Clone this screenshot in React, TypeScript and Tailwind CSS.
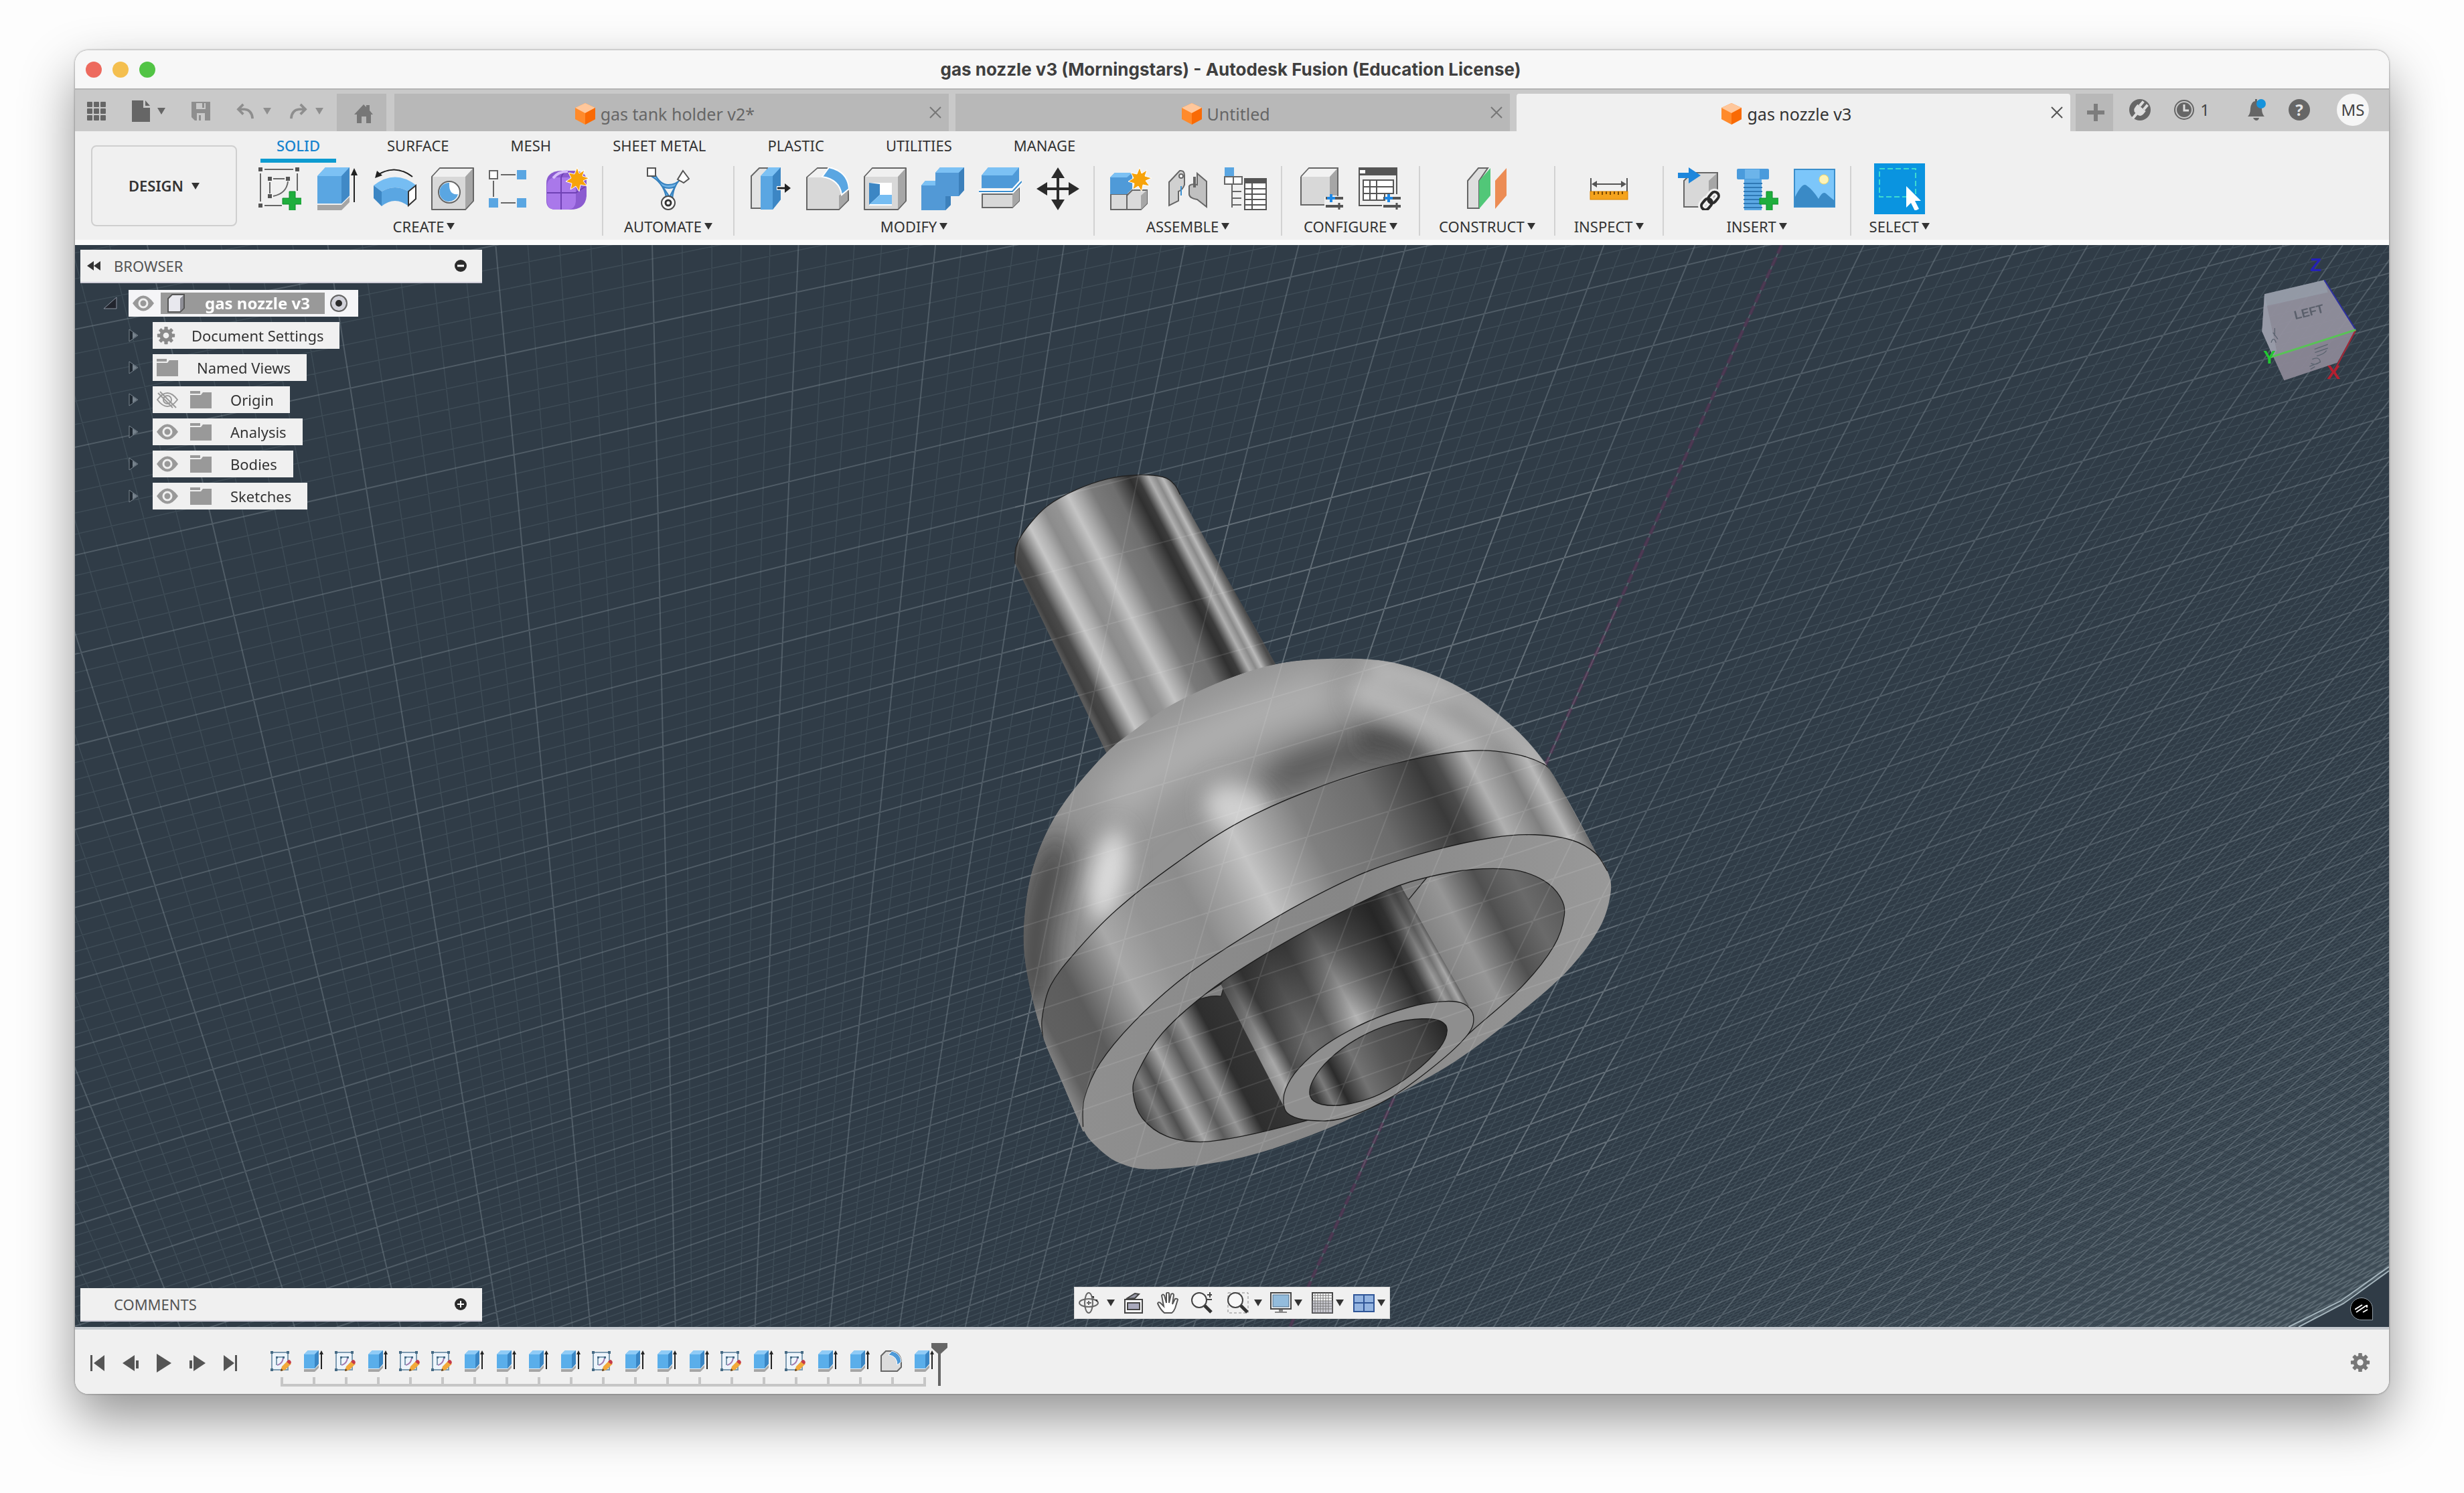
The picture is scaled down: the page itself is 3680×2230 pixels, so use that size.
import type { ReactNode } from "react";
import clsx from "clsx";

type Pt = [number, number];

// ---------- geometry helpers ----------

// Catmull-Rom spline through the points, as an SVG path
function smooth(pts: Pt[], closed = false) {
  const n = pts.length;
  const at = (i: number) => (closed ? pts[(i + n) % n] : pts[Math.max(0, Math.min(n - 1, i))]);
  let d = `M${pts[0][0]} ${pts[0][1]}`;
  const last = closed ? n : n - 1;
  for (let i = 0; i < last; i++) {
    const [p0, p1, p2, p3] = [at(i - 1), at(i), at(i + 1), at(i + 2)];
    const c1 = [p1[0] + (p2[0] - p0[0]) / 6, p1[1] + (p2[1] - p0[1]) / 6];
    const c2 = [p2[0] - (p3[0] - p1[0]) / 6, p2[1] - (p3[1] - p1[1]) / 6];
    d += `C${c1[0].toFixed(1)} ${c1[1].toFixed(1)} ${c2[0].toFixed(1)} ${c2[1].toFixed(1)} ${p2[0]} ${p2[1]}`;
  }
  return closed ? d + "Z" : d;
}

// Ground plane in perspective: u lines run top to bottom, v lines left to right
function uLine(k: number) {
  const x = (y: number) =>
    (26.5 * (220 + 0.2342 * (y - 367)) + k * (8317 - 1.858 * y)) / (26.5 + k);
  return `M${(x(366) - 112).toFixed(1)} 0L${(x(2066) - 112).toFixed(1)} 1700`;
}

function vLine(m: number) {
  const y = (x: number) =>
    (39.5 * (491.7 - 0.1996 * (x - 112)) + m * (8317 - x)) / (39.5 + 1.858 * m);
  return `M-88 ${(y(24) - 366).toFixed(1)}L3488 ${(y(3600) - 366).toFixed(1)}`;
}

function gridPath(minor: boolean) {
  let d = "";
  for (let i = -25; i <= 365; i++) {
    if ((i % 5 === 0) === minor) continue;
    d += uLine(i / 5) + vLine(i / 5);
  }
  return d;
}

const MINOR_GRID = gridPath(true);
const MAJOR_GRID = gridPath(false);

// ---------- small shared pieces ----------

function Svg({ box, className, children }: { box: string; className?: string; children: ReactNode }) {
  return (
    <svg viewBox={box} className={clsx("shrink-0", className)} fill="none" aria-hidden="true">
      {children}
    </svg>
  );
}

function Caret({ className = "w-3 h-3" }: { className?: string }) {
  return (
    <Svg box="0 0 12 12" className={className}>
      <path d="M0 1h12L6 11z" fill="currentColor" />
    </Svg>
  );
}

function IconButton({ label, className, children }: { label: string; className?: string; children: ReactNode }) {
  return (
    <button type="button" aria-label={label} className={clsx("flex items-center justify-center shrink-0", className)}>
      {children}
    </button>
  );
}

function Gear({ className, fill = "#777" }: { className?: string; fill?: string }) {
  return (
    <Svg box="0 0 32 32" className={className}>
      <g fill={fill}>
        {[0, 45, 90, 135].map((a) => (
          <rect key={a} x="13" y="1" width="6" height="30" rx="1" transform={`rotate(${a} 16 16)`} />
        ))}
        <circle cx="16" cy="16" r="11" />
      </g>
      <circle cx="16" cy="16" r="5" fill="#f0f0f0" />
    </Svg>
  );
}

// ---------- ribbon icons, all on a 64 grid ----------

const O = "#666";

function Tool({ children }: { children: ReactNode }) {
  return <Svg box="0 0 64 64" className="size-16">{children}</Svg>;
}

function Plus() {
  return <path d="M46 36h9v10h10v9H55v10h-9V55H36v-9h10z" fill="#1fae3d" stroke="#0d8a2b" />;
}

function Star() {
  return (
    <path
      d="M46 0l3 9 8-5-3 9 10 3-9 4 6 8-10-2-2 10-5-8-8 5 2-9-9-3 8-5-4-8 9 2z"
      fill="#f7a30a"
      stroke="#fff"
    />
  );
}

function SketchIcon() {
  return (
    <Tool>
      <path d="M9 3h43M3 9v42M58 9v26M9 57h26" stroke={O} strokeWidth="2" />
      <path d="M22 17h17M17 22v17M44 21q-2 18-22 22" stroke={O} strokeWidth="2" />
      <path d="M0 0h6v6H0zM55 0h6v6h-6zM0 54h6v6H0zM14 14h6v6h-6zM41 14h6v6h-6zM14 40h6v6h-6z" fill="#555" />
      <Plus />
    </Tool>
  );
}

function ExtrudeIcon() {
  return (
    <Tool>
      <path d="M2 56h36l12-12v8L38 64H2z" fill="#a5a5a5" />
      <path d="M2 13L14 0h36v42L38 54H2z" fill="#5aa6e2" />
      <path d="M2 13L14 0h36L38 13z" fill="#7cc1f4" />
      <path d="M38 13L50 0v42L38 54z" fill="#4089c6" />
      <path d="M57 52V8" stroke="#222" strokeWidth="2" />
      <path d="M52 12l5-11 5 11z" fill="#222" />
    </Tool>
  );
}

function RevolveIcon() {
  return (
    <Tool>
      <path d="M5 12Q32-6 58 14" stroke="#222" strokeWidth="2" />
      <path d="M2 16L5 5l8 7z" fill="#222" />
      <path d="M0 27Q32 2 64 27L52 36Q32 24 12 36z" fill="#76bdf2" />
      <path d="M0 27l12 9v22L0 46z" fill="#3c86c4" />
      <path d="M12 36q20-12 40 0v22Q32 42 12 58z" fill="#5aa6e2" />
      <path d="M52 36l11-9v20L52 57z" fill="#fff" stroke="#333" strokeWidth="2" />
    </Tool>
  );
}

function GrayCube({ children }: { children?: ReactNode }) {
  return (
    <>
      <path d="M1 14L13 1h50v49L51 63H1z" fill="#d8d8d8" stroke={O} strokeWidth="2" strokeLinejoin="round" />
      <path d="M2 14L13 2h49L51 14z" fill="#f0f0f0" />
      <path d="M51 14L62 2v48L51 62z" fill="#a6a6a6" />
      {children}
    </>
  );
}

function HoleIcon() {
  return (
    <Tool>
      <GrayCube>
        <circle cx="27" cy="37" r="16" fill="#fff" stroke={O} strokeWidth="2" />
        <path d="M27 23a14 14 0 1 0 13 17q-14 2-13-17z" fill="#5aa6e2" />
      </GrayCube>
    </Tool>
  );
}

function PatternIcon() {
  return (
    <Tool>
      <path d="M18 11h22M18 53h22M7 20v24" stroke={O} strokeWidth="2" />
      <rect x="1" y="5" width="12" height="12" fill="#fff" stroke={O} strokeWidth="2" />
      <path d="M42 4h14v14H42zM0 46h14v14H0zM42 46h14v14H42z" fill="#5aa6e2" />
    </Tool>
  );
}

function FormIcon() {
  return (
    <Tool>
      <path d="M0 24Q0 6 22 5h18q19 0 20 14v24q-2 20-24 20H12Q0 62 0 50z" fill="#8b5bd0" />
      <path d="M1 28q0-12 12-13h22q8 0 9 12v24q-1 11-11 12H12Q1 62 1 50z" fill="#a978ea" />
      <path d="M1 38h43l15-10M22 15v48M22 15q2-7 9-10" stroke="#6f41b4" strokeWidth="2" />
      <path d="M10 16Q18 6 32 6" stroke="#d6bdfa" strokeWidth="4" />
      <Star />
    </Tool>
  );
}

function AutomateIcon() {
  return (
    <Tool>
      <path d="M12 10q8 16 20 16T52 16q-14 12-14 36h-8Q28 26 8 14z" fill="#6fb2e6" stroke="#3580bd" strokeWidth="2" />
      <path d="M24 29q9 4 18 0L34 44z" fill="#f0f0f0" stroke="#3580bd" strokeWidth="2" />
      <rect x="1" y="1" width="12" height="12" fill="#fff" stroke="#555" strokeWidth="2" />
      <path d="M54 5l9 12-8 6-9-5z" fill="#fff" stroke="#555" strokeWidth="2" />
      <circle cx="32" cy="53" r="10" fill="#fff" stroke="#4a4a4a" strokeWidth="2" />
      <circle cx="32" cy="53" r="4" fill="#fff" stroke="#333" strokeWidth="3" />
    </Tool>
  );
}

function PressPullIcon() {
  return (
    <Tool>
      <path d="M4 13L16 1h12v60H4z" fill="#e3e3e3" stroke={O} strokeWidth="2" />
      <path d="M18 13L30 0h18v48L36 63H18z" fill="#5aa6e2" />
      <path d="M18 13L30 0h18L36 13z" fill="#7cc1f4" />
      <path d="M36 13L48 0v48L36 63z" fill="#3c86c4" />
      <path d="M42 31h14" stroke="#fff" strokeWidth="6" />
      <path d="M43 31h14" stroke="#222" strokeWidth="3" />
      <path d="M54 24l9 7-9 7z" fill="#222" />
    </Tool>
  );
}

function FilletIcon() {
  return (
    <Tool>
      <path d="M1 15L17 1h14q32 6 32 40v8L49 63H1z" fill="#d8d8d8" stroke={O} strokeWidth="2" />
      <path d="M2 15L17 2h14l-8 13z" fill="#f2f2f2" />
      <path d="M49 62V42l13-8v15z" fill="#a6a6a6" />
      <path d="M24 14L34 0q28 6 30 32L53 41Q50 18 24 14z" fill="#5aa6e2" stroke="#fff" strokeWidth="2" />
    </Tool>
  );
}

function ShellIcon() {
  return (
    <Tool>
      <GrayCube>
        <path d="M8 23h34v34H8z" fill="#fff" />
        <path d="M8 23l16 2v16L8 56z" fill="#3c86c4" />
        <path d="M24 41h18v14H9z" fill="#76bdf2" />
      </GrayCube>
    </Tool>
  );
}

function CombineIcon() {
  return (
    <Tool>
      <path d="M0 27l6-7h15V8l7-8h36v34l-8 9H44v13l-8 8H0z" fill="#5299d6" />
      <path d="M0 27l6-7h15v7zM21 8l7-8h36l-8 8z" fill="#7cc1f4" />
      <path d="M56 8l8-8v34l-8 9zM36 43h8v13l-8 8z" fill="#3c80bb" />
    </Tool>
  );
}

function SplitIcon() {
  return (
    <Tool>
      <path d="M5 40h46l9-8v18L50 60H5z" fill="#d8d8d8" stroke={O} strokeWidth="2" />
      <path d="M50 40l10-8v18L50 60z" fill="#a6a6a6" />
      <path d="M4 12L14 0h46v20L50 31H4z" fill="#4f9ad8" />
      <path d="M4 12L14 0h46L50 12z" fill="#7cc1f4" />
      <path d="M0 36h50l14-15" stroke="#fff" strokeWidth="6" />
      <path d="M0 36h50l14-15" stroke="#3a8fd0" strokeWidth="2" />
    </Tool>
  );
}

function MoveIcon() {
  return (
    <Tool>
      <path d="M32 10v44M10 32h44" stroke="#2b2b2b" strokeWidth="4" />
      <path d="M32 0l10 16H22zM32 64l10-16H22zM0 32l16-10v20zM64 32L48 22v20z" fill="#2b2b2b" />
    </Tool>
  );
}

function NewComponentIcon() {
  return (
    <Tool>
      <path d="M3 40h24v23H3z" fill="#dadada" stroke={O} strokeWidth="2" />
      <path d="M27 42l8-8h22v20l-9 9H27z" fill="#dadada" stroke={O} strokeWidth="2" />
      <path d="M48 42l9-8v20l-9 9z" fill="#a6a6a6" />
      <path d="M2 15l7-7h26v24l-8 8H2z" fill="#4f9ad8" />
      <path d="M2 15l7-7h26l-8 7z" fill="#7cc1f4" />
      <Star />
    </Tool>
  );
}

function JointIcon() {
  return (
    <Tool>
      <path d="M4 57V22L20 5q7-1 7 7v14q-3 8-9 10v14z" fill="#d0d0d0" stroke={O} strokeWidth="2" />
      <circle cx="22" cy="13" r="3" fill="#fff" stroke={O} strokeWidth="2" />
      <path d="M22 28v14" stroke="#3a8fd0" strokeWidth="2" />
      <path d="M46 9l14 12v38L46 48q-12-2-12-8V28q2-4 12-2z" fill="#c0c0c0" stroke={O} strokeWidth="2" />
      <path d="M42 14v16" stroke={O} strokeWidth="4" />
    </Tool>
  );
}

function BomIcon() {
  return (
    <Tool>
      <path d="M12 24v36M12 36h14M12 46h14M12 56h14" stroke={O} strokeWidth="2" />
      <rect x="1" y="0" width="14" height="14" fill="#5aa6e2" />
      <path d="M1 14h13v11H1zM14 14h13v11H14z" fill="#fff" stroke={O} strokeWidth="2" />
      <rect x="31" y="17" width="32" height="46" fill="#fff" stroke="#555" strokeWidth="2" />
      <rect x="31" y="16" width="32" height="8" fill="#555" />
      <path d="M31 32h32M31 40h32M31 48h32M31 56h32M42 24v39" stroke="#555" strokeWidth="2" />
    </Tool>
  );
}

function Sliders() {
  return (
    <>
      <path d="M38 46h28M38 58h28" stroke="#555" strokeWidth="4" />
      <path d="M58 53v10" stroke="#555" strokeWidth="3" />
      <path d="M46 40v12M40 46h12" stroke="#1e88e5" strokeWidth="4" />
    </>
  );
}

function ConfigureIcon() {
  return (
    <Tool>
      <path d="M1 14L13 1h43v42M36 56H1V14" fill="#d8d8d8" stroke={O} strokeWidth="2" />
      <path d="M2 14L13 2h42L44 14z" fill="#f2f2f2" />
      <path d="M44 14L55 2v40H44z" fill="#a6a6a6" />
      <path d="M2 14h42v30H36v11H2z" fill="#d8d8d8" />
      <Sliders />
    </Tool>
  );
}

function ConfigTableIcon() {
  return (
    <Tool>
      <path d="M36 57H2V2h56v38" stroke="#555" strokeWidth="2" />
      <rect x="1" y="0" width="58" height="12" fill="#555" />
      <rect x="3" y="4" width="8" height="5" fill="#fff" />
      <path d="M8 19h45v20H40v10H8z" fill="#fff" stroke="#555" strokeWidth="2" />
      <path d="M8 29h45M8 39h32M18 19v30M28 19v30" stroke="#555" strokeWidth="2" />
      <Sliders />
    </Tool>
  );
}

function PlaneIcon() {
  return (
    <Tool>
      <path d="M3 20L19 1h14L20 20v41H3z" fill="#dedede" stroke={O} strokeWidth="2" />
      <path d="M20 20L37 1v41L20 62z" fill="#51c778" />
      <path d="M44 20L61 1v41L44 62z" fill="#ec8c54" />
    </Tool>
  );
}

function MeasureIcon() {
  return (
    <Tool>
      <path d="M5 16v20M59 16v20M10 25h44" stroke="#555" strokeWidth="2" />
      <path d="M6 25l8-5v10zM58 25l-8-5v10z" fill="#555" />
      <rect x="4" y="36" width="56" height="12" fill="#f5a31d" stroke="#d98200" />
      <path d="M10 36v5M16 36v4M22 36v5M28 36v4M34 36v5M40 36v4M46 36v5M52 36v4" stroke="#7a4a00" strokeWidth="2" />
    </Tool>
  );
}

function InsertIcon() {
  return (
    <Tool>
      <path d="M9 20L21 8h38v38L46 59H9z" fill="#d8d8d8" stroke={O} strokeWidth="2" />
      <path d="M46 20L58 9v36L46 58z" fill="#a6a6a6" />
      <path d="M0 8h16V0l18 12-18 12v-8H0z" fill="#1d86dc" />
      <g stroke="#f0f0f0" strokeWidth="10">
        <rect x="47" y="36" width="12" height="18" rx="6" transform="rotate(40 53 45)" />
        <rect x="37" y="46" width="12" height="18" rx="6" transform="rotate(40 43 55)" />
      </g>
      <g stroke="#2b2b2b" strokeWidth="4">
        <rect x="47" y="36" width="12" height="18" rx="6" transform="rotate(40 53 45)" />
        <rect x="37" y="46" width="12" height="18" rx="6" transform="rotate(40 43 55)" />
      </g>
    </Tool>
  );
}

function FastenerIcon() {
  return (
    <Tool>
      <rect x="2" y="2" width="48" height="16" rx="2" fill="#4a9bdc" />
      <path d="M14 3h22v14H14z" fill="#6cb4ea" />
      <rect x="13" y="18" width="26" height="46" fill="#5ba8e4" />
      <path d="M12 24h28M12 30h28M12 36h28M12 42h28M12 48h28M12 54h28M12 60h28" stroke="#2f78b5" strokeWidth="2" />
      <Plus />
    </Tool>
  );
}

function CanvasIcon() {
  return (
    <Tool>
      <rect x="2" y="3" width="60" height="56" fill="#7cc6fa" stroke="#3b8ecb" strokeWidth="2" />
      <path d="M3 44Q14 22 20 27q9 6 18 20 6-12 11-8 8 7 12 10v9H3z" fill="#3a8ac6" />
      <circle cx="46" cy="18" r="7" fill="#fdf3b8" stroke="#f4d660" />
    </Tool>
  );
}

function SelectIcon() {
  return (
    <Tool>
      <rect x="2" y="2" width="54" height="42" stroke="#3ddad0" strokeWidth="2" strokeDasharray="8 4" />
      <path d="M42 28v32l7-7 6 12 6-3-6-12h9z" fill="#fff" />
    </Tool>
  );
}

// ---------- title bar ----------

function TitleBar() {
  return (
    <header className="relative flex h-[57px] items-center justify-center bg-[#f7f7f7] pr-1">
      <div className="absolute left-4 flex gap-4">
        <button type="button" aria-label="Close" className="size-6 rounded-full bg-[#ed6a5e]" />
        <button type="button" aria-label="Minimize" className="size-6 rounded-full bg-[#f4bf4f]" />
        <button type="button" aria-label="Zoom" className="size-6 rounded-full bg-[#52c445]" />
      </div>
      <h1 className="font-['Inter',sans-serif] text-[26px] font-bold text-[#3f3f3f]">
        gas nozzle v3 (Morningstars) - Autodesk Fusion (Education License)
      </h1>
    </header>
  );
}

// ---------- document tabs ----------

function BoxIcon() {
  return (
    <Svg box="0 0 30 32" className="w-[30px] h-8">
      <path d="M15 0l15 7v17l-15 8-15-8V7z" fill="#ff8a2b" />
      <path d="M15 0l15 7-15 8L0 7z" fill="#ffc79b" />
      <path d="M15 15l15-8v17l-15 8z" fill="#f96a05" />
    </Svg>
  );
}

function DocTab({ name, active }: { name: string; active?: boolean }) {
  return (
    <div
      className={clsx(
        "flex flex-1 min-w-0 items-center pl-3 pr-2 text-[25px]",
        active ? "bg-[#f0f0f0] text-[#333] rounded-t" : "bg-[#b8b8b8] text-[#666]"
      )}
    >
      <button type="button" className="flex flex-1 min-w-0 items-center justify-center gap-2 pt-1">
        <BoxIcon />
        <span className="truncate leading-8">{name}</span>
      </button>
      <IconButton label={`Close ${name}`} className="size-6">
        <Svg box="0 0 24 24" className="size-6">
          <path d="M4 4l16 16M20 4L4 20" stroke={active ? "#555" : "#777"} strokeWidth="2" />
        </Svg>
      </IconButton>
    </div>
  );
}

function TabBar() {
  return (
    <div className="flex h-16 items-stretch bg-[#c9c9c9] border-t-2 border-[#b4b4b4] pt-1.5">
      <div className="-mt-1 flex w-[391px] shrink-0 items-center pl-[18px] text-[#666]">
        <IconButton label="Data panel" className="w-7">
          <Svg box="0 0 28 28" className="size-7">
            {[0, 10, 20].map((y) =>
              [0, 10, 20].map((x) => (
                <rect key={`${x}-${y}`} x={x} y={y} width="8" height="8" rx="1" fill="#666" />
              ))
            )}
          </Svg>
        </IconButton>
        <IconButton label="File" className="ml-[38px] w-[52px] gap-2.5">
          <Svg box="0 0 28 32" className="w-7 h-8">
            <path d="M0 0h17v11h10v21H0zM20 0l7 8h-7z" fill="#666" />
          </Svg>
          <Caret />
        </IconButton>
        <IconButton label="Save" className="ml-[38px] w-7 text-[#8e8e8e]">
          <Svg box="0 0 28 28" className="size-7">
            <path d="M0 0h28v28H5l-5-5z" fill="#8e8e8e" />
            <path d="M7 2h14v9H7zM8 17h12v11H8z" fill="#c9c9c9" />
            <path d="M16 2h3v7h-3zM11 20h3v8h-3z" fill="#8e8e8e" />
          </Svg>
        </IconButton>
        <IconButton label="Undo" className="ml-[38px] w-[54px] gap-3 text-[#8e8e8e]">
          <Svg box="0 0 28 26" className="w-7 h-6">
            <path d="M10 2L2 10l8 8M2 10h10q12 1 13 15" stroke="#8e8e8e" strokeWidth="4" />
          </Svg>
          <Caret />
        </IconButton>
        <IconButton label="Redo" className="ml-6 w-[54px] gap-3 text-[#8e8e8e]">
          <Svg box="0 0 28 26" className="w-7 h-6">
            <path d="M18 2l8 8-8 8M26 10H16Q4 11 3 25" stroke="#8e8e8e" strokeWidth="4" />
          </Svg>
          <Caret />
        </IconButton>
      </div>
      <IconButton label="Home" className="mr-3 w-[74px] bg-[#b8b8b8] pl-1.5">
        <Svg box="0 0 28 28" className="size-7 mt-1">
          <path d="M14 0l4 4V1h5v8l5 6h-3v13h-7V18h-7v10H4V15H0z" fill="#777" />
        </Svg>
      </IconButton>
      <nav className="flex flex-1 min-w-0 gap-2.5" aria-label="Documents">
        <DocTab name="gas tank holder v2*" />
        <DocTab name="Untitled" />
        <DocTab name="gas nozzle v3" active />
      </nav>
      <IconButton label="New tab" className="ml-2 w-[56px] bg-[#b8b8b8] pl-1">
        <Svg box="0 0 26 26" className="size-[26px]">
          <path d="M13 0v26M0 13h26" stroke="#7d7d7d" strokeWidth="6" />
        </Svg>
      </IconButton>
      <div className="-mt-2 flex shrink-0 items-center pr-[30px] pl-6 text-2xl text-[#444]">
        <IconButton label="Extensions" className="w-8">
          <Svg box="0 0 32 32" className="size-8">
            <circle cx="16" cy="16" r="16" fill="#666" />
            <g transform="rotate(40 16 16)">
              <path d="M8 12h16v4q0 8-6 8v9h-4v-9q-6 0-6-8z" fill="#dcdcdc" />
              <path d="M12 12V3M20 12V3" stroke="#dcdcdc" strokeWidth="4" />
            </g>
          </Svg>
        </IconButton>
        <button type="button" className="ml-[34px] flex items-center gap-2" aria-label="Job status, 1 job">
          <Svg box="0 0 32 32" className="size-8">
            <circle cx="16" cy="16" r="14" stroke="#666" strokeWidth="2" />
            <circle cx="16" cy="16" r="11" fill="#666" />
            <path d="M16 8v9h7" stroke="#ddd" strokeWidth="3" />
          </Svg>
          <span>1</span>
        </button>
        <IconButton label="Notifications" className="ml-[54px] w-8">
          <Svg box="0 0 32 34" className="w-8 h-[34px]">
            <path d="M3 27q4-4 4-12Q8 5 14 4V1h3v3q7 2 7 11 0 8 4 12z" fill="#666" />
            <path d="M11 29h9q-1 4-4 4t-5-4z" fill="#666" />
            <circle cx="23" cy="8" r="7" fill="#1593dc" />
          </Svg>
        </IconButton>
        <IconButton label="Help" className="ml-8 size-8 rounded-full bg-[#666] font-bold text-[#e4e4e4]">
          ?
        </IconButton>
        <button type="button" aria-label="Account" className="ml-10 size-12 rounded-full bg-[#f6f6f6]">
          MS
        </button>
      </div>
    </div>
  );
}

// ---------- ribbon ----------

const RIBBON_TABS = ["SOLID", "SURFACE", "MESH", "SHEET METAL", "PLASTIC", "UTILITIES", "MANAGE"];

const GROUPS: { label: string; pad: string; icons: [string, () => ReactNode][] }[] = [
  {
    label: "CREATE",
    pad: "pl-2.5 pr-[19px]",
    icons: [
      ["Create Sketch", SketchIcon],
      ["Extrude", ExtrudeIcon],
      ["Revolve", RevolveIcon],
      ["Hole", HoleIcon],
      ["Pattern", PatternIcon],
      ["Create Form", FormIcon],
    ],
  },
  { label: "AUTOMATE", pad: "px-[31px]", icons: [["Automated Modeling", AutomateIcon]] },
  {
    label: "MODIFY",
    pad: "px-[21px]",
    icons: [
      ["Press Pull", PressPullIcon],
      ["Fillet", FilletIcon],
      ["Shell", ShellIcon],
      ["Combine", CombineIcon],
      ["Split Body", SplitIcon],
      ["Move", MoveIcon],
    ],
  },
  {
    label: "ASSEMBLE",
    pad: "px-[21px]",
    icons: [
      ["New Component", NewComponentIcon],
      ["Joint", JointIcon],
      ["Bill of Materials", BomIcon],
    ],
  },
  {
    label: "CONFIGURE",
    pad: "px-[27px]",
    icons: [
      ["Configure", ConfigureIcon],
      ["Configuration Table", ConfigTableIcon],
    ],
  },
  { label: "CONSTRUCT", pad: "px-7", icons: [["Offset Plane", PlaneIcon]] },
  { label: "INSPECT", pad: "px-7", icons: [["Measure", MeasureIcon]] },
  {
    label: "INSERT",
    pad: "px-[21px]",
    icons: [
      ["Insert Derive", InsertIcon],
      ["Insert Fastener", FastenerIcon],
      ["Canvas", CanvasIcon],
    ],
  },
  { label: "SELECT", pad: "px-[27px]", icons: [["Select", SelectIcon]] },
];

function Ribbon() {
  return (
    <section className="flex h-[170px] border-b-8 border-[#fbfbfb] bg-[#f0f0f0] text-[22px] text-[#333]">
      <div className="pl-6 pr-[22px] pt-[21px]">
        <button
          type="button"
          className="flex h-[121px] w-[218px] items-center justify-center gap-3 rounded-lg border-2 border-[#cfcfcf] font-semibold"
        >
          DESIGN
          <Caret />
        </button>
      </div>
      <div className="flex flex-col">
        <nav className="flex gap-11 pl-[13px]" aria-label="Ribbon">
          {RIBBON_TABS.map((tab, i) => (
            <button
              key={tab}
              type="button"
              className={clsx(
                "h-[47px] border-b-[6px] px-6 pt-0.5",
                i === 0 ? "mr-2 border-[#0d9bd0] font-medium text-[#1784cf]" : "border-transparent"
              )}
            >
              {tab}
            </button>
          ))}
        </nav>
        <div className="mt-[5px] flex h-[104px]">
          {GROUPS.map(({ label, pad, icons }) => (
            <div
              key={label}
              className={clsx(
                "flex flex-col items-center justify-between pt-0.5",
                pad,
                label !== "SELECT" && "border-r-2 border-[#d2d2d2]"
              )}
            >
              <div className="flex gap-[22px]">
                {icons.map(([name, Icon]) => (
                  <IconButton
                    key={name}
                    label={name}
                    className={label === "SELECT" ? "-m-1.5 bg-[#0a94e0] p-1.5" : undefined}
                  >
                    <Icon />
                  </IconButton>
                ))}
              </div>
              <button type="button" className="flex items-center gap-1 leading-7">
                {label}
                <Caret />
              </button>
            </div>
          ))}
        </div>
      </div>
    </section>
  );
}

// ---------- browser tree ----------

function Eye({ off }: { off?: boolean }) {
  return (
    <Svg box="0 0 32 26" className="w-8 h-[26px]">
      {off ? (
        <g stroke="#999" strokeWidth="2">
          <path d="M1 13Q16-7 31 13Q16 33 1 13zM5 1l24 24M2 3l22 22" />
          <circle cx="16" cy="13" r="6" />
        </g>
      ) : (
        <>
          <path d="M0 13Q16-10 32 13Q16 36 0 13z" fill="#999" />
          <circle cx="16" cy="13" r="6" stroke="#f0f0f0" strokeWidth="3" />
        </>
      )}
    </Svg>
  );
}

function Folder() {
  return (
    <Svg box="0 0 32 26" className="w-8 h-[26px]">
      <path d="M0 0h15v4H0zM0 6h16l3-4h13v24H0z" fill="#999" />
    </Svg>
  );
}

function Expander({ open }: { open?: boolean }) {
  return (
    <IconButton label={open ? "Collapse" : "Expand"} className={open ? "mr-4 w-6" : "mr-5 w-4"}>
      {open ? (
        <Svg box="0 0 24 20" className="w-6 h-5">
          <path d="M22 1v17H3z" fill="#22252e" stroke="#8a92a0" />
        </Svg>
      ) : (
        <Svg box="0 0 16 20" className="w-4 h-5">
          <path d="M1 1v18l13-9z" fill="#1f2831" stroke="#76828c" />
          <path d="M6 5v10l7-5z" fill="#76828c" />
        </Svg>
      )}
    </IconButton>
  );
}

const TREE: { name: string; eye?: "on" | "off"; icon: "gear" | "folder" }[] = [
  { name: "Document Settings", icon: "gear" },
  { name: "Named Views", icon: "folder" },
  { name: "Origin", eye: "off", icon: "folder" },
  { name: "Analysis", eye: "on", icon: "folder" },
  { name: "Bodies", eye: "on", icon: "folder" },
  { name: "Sketches", eye: "on", icon: "folder" },
];

function BrowserPanel() {
  return (
    <div className="w-[600px] text-[22px] text-[#333]">
      <div className="flex h-[50px] items-center border-b-2 border-[#cfcdd8] bg-[#f0f0f0] pl-2.5 pr-[23px]">
        <IconButton label="Collapse browser" className="w-5">
          <Svg box="0 0 20 14" className="w-5 h-3.5">
            <path d="M10 0v14L0 7zM20 0v14l-10-7z" fill="#333" />
          </Svg>
        </IconButton>
        <h2 className="ml-5 flex-1 text-[#555]">BROWSER</h2>
        <IconButton label="Minimize browser" className="w-[18px]">
          <Svg box="0 0 18 18" className="size-[18px]">
            <circle cx="9" cy="9" r="9" fill="#2b2b2b" />
            <path d="M4 9h10" stroke="#fff" strokeWidth="3" />
          </Svg>
        </IconButton>
      </div>
      <ul className="mt-2.5 space-y-2">
        <li className="flex h-10 items-center pl-8">
          <Expander open />
          <div className="flex h-full items-center gap-3 bg-[#f5f5f7] pl-1.5 pr-4">
            <Eye />
            <span className="-ml-0.5 flex h-8 items-center bg-[#999] pl-2.5 pr-[22px]">
              <Svg box="0 0 26 28" className="w-[26px] h-7">
                <path d="M1 7l6-6h18v20l-6 6H1z" fill="#e8e8ee" stroke="#555" strokeWidth="2" />
                <path d="M19 7l5-5v19l-5 5z" fill="#8e8e96" />
              </Svg>
              <span className="ml-[30px] text-2xl font-bold text-white">gas nozzle v3</span>
            </span>
            <input
              type="radio"
              name="active-component"
              aria-label="Activate gas nozzle v3"
              defaultChecked
              className="-ml-1 size-[26px] appearance-none rounded-full border-2 border-[#666] bg-[#2b2b2b] shadow-[inset_0_0_0_6px_#d2d2da]"
            />
          </div>
        </li>
        {TREE.map(({ name, eye, icon }) => (
          <li key={name} className="flex h-10 items-center pl-[72px]">
            <Expander />
            <div className="flex h-full items-center bg-[#f0f0f0] pl-1.5 pr-6">
              {eye && (
                <button type="button" aria-label={`Toggle ${name}`} className="mr-[18px]">
                  <Eye off={eye === "off"} />
                </button>
              )}
              {icon === "gear" ? <Gear className="size-7" fill="#8a8a8a" /> : <Folder />}
              <span className={icon === "gear" ? "ml-6" : "ml-7"}>{name}</span>
            </div>
          </li>
        ))}
      </ul>
    </div>
  );
}

// ---------- the part on the canvas ----------

const STEM_TOP: Pt[] = [[58, 232], [60, 195], [85, 155], [135, 108], [205, 73], [280, 50], [350, 42], [410, 46], [438, 62], [452, 84]];
const OUTLINE: Pt[] = [
  [220, 1440], [170, 1335], [125, 1240], [92, 1130], [78, 1040], [84, 950], [103, 870], [140, 790], [195, 715],
  [275, 634], [340, 587], [430, 532], [560, 478], [690, 443], [820, 433], [940, 438], [1050, 465], [1150, 510],
  [1250, 580], [1320, 650], [1376, 730], [1425, 810], [1450, 853],
];
const SEAM: Pt[] = [[125, 1245], [122, 1200], [142, 1130], [200, 1060], [300, 968], [440, 870], [600, 778], [800, 701], [1000, 649], [1150, 629], [1250, 636], [1320, 657], [1345, 680]];
const RIM: Pt[] = [
  [220, 1430], [223, 1370], [260, 1295], [340, 1208], [460, 1112], [600, 1028], [750, 950], [900, 886], [1050, 843],
  [1200, 814], [1300, 808], [1390, 820], [1445, 848], [1473, 885], [1481, 930], [1455, 1005], [1380, 1095],
  [1260, 1190], [1110, 1290], [950, 1370], [800, 1435], [600, 1495], [400, 1520], [310, 1508], [250, 1470],
];
const BORE: Pt[] = [
  [340, 1360], [350, 1315], [410, 1230], [520, 1142], [650, 1065], [800, 990], [950, 925], [1050, 897], [1150, 882],
  [1250, 883], [1320, 905], [1360, 940], [1370, 980], [1345, 1045], [1270, 1130], [1150, 1225], [1050, 1303],
  [920, 1372], [740, 1420], [600, 1450], [500, 1462], [420, 1450], [362, 1412],
];
const RING: Pt[] = [[700, 1385], [704, 1350], [735, 1306], [800, 1255], [900, 1206], [1000, 1175], [1080, 1163], [1130, 1168], [1153, 1195], [1138, 1235], [1060, 1300], [950, 1370], [840, 1412], [760, 1416], [715, 1405]];
const RING_HOLE: Pt[] = [[763, 1365], [770, 1330], [810, 1285], [880, 1240], [960, 1210], [1030, 1200], [1075, 1205], [1090, 1225], [1072, 1262], [1010, 1315], [930, 1360], [850, 1382], [790, 1382]];

const BODY = smooth(OUTLINE) + "L1300 1000L700 1300Z";
const BAND = smooth(SEAM) + "L1452 856L1300 1100L300 1450L220 1440Z";
const TUBE = "M550 1128L640 1000L960 880L985 925L1142 1172L900 1300L700 1387Z";

// Brushed metal reflections, [offset, colour] from one side to the other
const METAL: Record<string, { at: [number, number, number, number]; stops: [number, string][] }> = {
  stem: {
    at: [115, 342, 485, 125],
    stops: [
      [0, "#5a5a5a"], [0.03, "#404040"], [0.08, "#4a4a4a"], [0.12, "#808080"], [0.18, "#c6c6c6"], [0.23, "#b0b0b0"],
      [0.29, "#8c8c8c"], [0.36, "#949494"], [0.44, "#c4c4c4"], [0.5, "#a4a4a4"], [0.57, "#7a7a7a"], [0.68, "#6e6e6e"],
      [0.78, "#303030"], [0.82, "#3c3c3c"], [0.875, "#b0b0b0"], [0.91, "#8a8a8a"], [0.94, "#bababa"], [0.97, "#777"],
      [1, "#4a4a4a"],
    ],
  },
  band: {
    at: [125, 1275, 1287, 578],
    stops: [
      [0, "#8a8a8a"], [0.03, "#606060"], [0.1, "#5c5c5c"], [0.19, "#a8a8a8"], [0.26, "#949494"], [0.35, "#8c8c8c"],
      [0.41, "#a4a4a4"], [0.465, "#c4c4c4"], [0.52, "#a2a2a2"], [0.58, "#808080"], [0.7, "#6c6c6c"], [0.8, "#3a3a3a"],
      [0.83, "#4c4c4c"], [0.88, "#b0b0b0"], [0.935, "#808080"], [0.97, "#b8b8b8"], [1, "#6a6a6a"],
    ],
  },
  bore: {
    at: [340, 1367, 1281, 802],
    stops: [
      [0, "#4a4a4a"], [0.03, "#7c7c7c"], [0.055, "#505050"], [0.09, "#a6a6a6"], [0.13, "#5c5c5c"], [0.165, "#949494"],
      [0.21, "#2e2e2e"], [0.3, "#383838"], [0.69, "#7c7c7c"], [0.78, "#969696"], [0.86, "#505050"], [0.93, "#6a6a6a"],
      [1, "#5a5a5a"],
    ],
  },
  tube: {
    at: [560, 1150, 979, 898],
    stops: [
      [0, "#8c8c8c"], [0.05, "#a8a8a8"], [0.12, "#4a4a4a"], [0.25, "#6e6e6e"], [0.36, "#606060"], [0.5, "#b2b2b2"],
      [0.64, "#666"], [0.8, "#2c2c2c"], [0.85, "#404040"], [0.91, "#9c9c9c"], [0.94, "#7a7a7a"], [0.97, "#a8a8a8"],
      [1, "#505050"],
    ],
  },
  drill: {
    at: [763, 1340, 1060, 1170],
    stops: [[0, "#3a3a3a"], [0.08, "#7a7a7a"], [0.18, "#2b2b2b"], [0.34, "#727272"], [0.55, "#555"], [0.8, "#444"], [1, "#262626"]],
  },
};

function Nozzle() {
  return (
    <g transform="translate(1368 314) scale(0.625 0.7015)">
      <defs>
        {Object.entries(METAL).map(([id, { at, stops }]) => (
          <linearGradient key={id} id={id} gradientUnits="userSpaceOnUse" x1={at[0]} y1={at[1]} x2={at[2]} y2={at[3]}>
            {stops.map(([o, c]) => (
              <stop key={o} offset={o} stopColor={c} />
            ))}
          </linearGradient>
        ))}
        <linearGradient id="face" x1="0" x2="1">
          <stop offset="0" stopColor="#8f8f8f" />
          <stop offset="0.5" stopColor="#868686" />
          <stop offset="1" stopColor="#999" />
        </linearGradient>
        <linearGradient id="tubeShade" gradientUnits="userSpaceOnUse" x1="720" y1="1010" x2="820" y2="1220">
          <stop offset="0" stopColor="#222" stopOpacity="0.75" />
          <stop offset="1" stopColor="#222" stopOpacity="0" />
        </linearGradient>
        <filter id="soft" x="-50%" y="-50%" width="200%" height="200%">
          <feGaussianBlur stdDeviation="24" />
        </filter>
        <filter id="softer" x="-50%" y="-50%" width="200%" height="200%">
          <feGaussianBlur stdDeviation="40" />
        </filter>
        <clipPath id="bodyClip">
          <path d={BODY} />
        </clipPath>
        <clipPath id="boreClip">
          <path d={smooth(BORE, true)} />
        </clipPath>
      </defs>

      <path d={smooth(STEM_TOP) + "L690 460L500 640L290 660Z"} fill="url(#stem)" />
      <path d={smooth(STEM_TOP)} stroke="#222" strokeWidth="2" fill="none" />

      <g clipPath="url(#bodyClip)">
        <path d={BODY} fill="#949494" />
        <g fill="none" filter="url(#softer)">
          <path d="M110 1180Q80 1000 170 820" stroke="#333" strokeWidth="74" />
          <path d="M280 760Q440 600 820 500" stroke="#b4b4b4" strokeWidth="90" />
          <path d="M660 700Q860 590 1010 650" stroke="#444" strokeWidth="70" />
          <path d="M600 900Q760 780 960 720" stroke="#808080" strokeWidth="50" />
        </g>
        <g fill="none" filter="url(#soft)">
          <path d="M880 605Q970 585 1060 665" stroke="#3a3a3a" strokeWidth="30" />
          <path d="M860 500Q1000 530 1170 640" stroke="#c4c4c4" strokeWidth="44" />
          <path d="M900 450Q1150 490 1340 680" stroke="#cacaca" strokeWidth="34" />
          <path d="M1090 520Q1190 570 1270 640" stroke="#777" strokeWidth="14" />
          <ellipse cx="280" cy="895" rx="46" ry="100" fill="#dadada" transform="rotate(14 280 895)" />
          <ellipse cx="590" cy="760" rx="84" ry="56" fill="#d0d0d0" transform="rotate(24 590 760)" />
        </g>
        <path d={BAND} fill="url(#band)" />
        <path d={smooth(SEAM)} stroke="#1d1d1d" strokeWidth="2" fill="none" />
      </g>

      <path d={smooth(RIM, true)} fill="url(#face)" />
      <path d={smooth(RIM.slice(0, 14))} stroke="#1d1d1d" strokeWidth="2" fill="none" />
      <path d={smooth(BORE, true)} fill="url(#bore)" />
      <g clipPath="url(#boreClip)">
        <path d="M480 1165l80-45-10 32q-30-4-70 13zM970 915l80-25-52 56z" fill="#808080" stroke="#222" strokeWidth="2" />
        <path d={TUBE} fill="url(#tube)" />
        <path d={TUBE} fill="url(#tubeShade)" />
      </g>
      <path d={smooth(BORE, true)} stroke="#1d1d1d" strokeWidth="2" fill="none" />
      <path d={smooth(RING, true)} fill="#8e8e8e" stroke="#1d1d1d" strokeWidth="2" />
      <path d={smooth(RING_HOLE, true)} fill="url(#drill)" stroke="#1d1d1d" strokeWidth="2" />
    </g>
  );
}

function Scene() {
  return (
    <svg
      viewBox="0 0 3456 1616"
      preserveAspectRatio="xMidYMid slice"
      className="absolute inset-0 h-full w-full"
      role="img"
      aria-label="Model canvas"
    >
      <defs>
        <clipPath id="ground">
          <path d="M0 0H3456V1532L3388 1581L3321 1616H0Z" />
        </clipPath>
      </defs>
      <rect width="3456" height="1616" fill="#303c47" />
      <g clipPath="url(#ground)" fill="none" stroke="#a6b6be">
        <path d={MINOR_GRID} strokeOpacity="0.13" strokeWidth="1.5" />
        <path d={MAJOR_GRID} strokeOpacity="0.27" strokeWidth="2" />
        <path d={uLine(13)} stroke="#4d3350" strokeOpacity="0.8" strokeWidth="5" strokeDasharray="14 6" />
      </g>
      <path d="M3321 1616L3388 1581L3456 1532M3306 1616L3384 1577L3456 1526" stroke="#a4b4bc" strokeWidth="2" fill="none" />
      <Nozzle />
      {/* ground lines show faintly through the part */}
      <clipPath id="through">
        <rect x="1404" y="340" width="900" height="1050" />
      </clipPath>
      <path d={MAJOR_GRID} clipPath="url(#through)" stroke="#fff" strokeOpacity="0.1" strokeWidth="2" fill="none" />
    </svg>
  );
}

function ViewCube() {
  return (
    <svg viewBox="0 0 804 690" className="absolute right-0 top-1 h-[230px] w-[268px]" role="img" aria-label="View cube">
      <path d="M246 208L514 145L655 368L286 490L235 375Z" fill="#918f9d" fillOpacity="0.95" />
      <path d="M286 490L655 368L572 515L334 595Z" fill="#8b8796" fillOpacity="0.95" />
      <path d="M246 208L235 375L286 490L300 460Z" fill="#9a9fab" fillOpacity="0.8" />
      <path d="M246 208L514 145L530 200L250 262Z" fill="#9aa8b3" fillOpacity="0.5" />
      <path d="M514 145L655 368" stroke="#2d2fa0" strokeWidth="6" />
      <path d="M655 368L560 550" stroke="#a02838" strokeWidth="7" />
      <path d="M655 368L275 490" stroke="#58c455" strokeWidth="9" />
      <g stroke="#5c6470" strokeWidth="4" fill="none">
        <path d="M470 455l60-22M472 470l58-20M480 485q30-6 44-24M460 500q30-14 36 10-20 20-42 8M448 532l50-20M452 545l20-12" />
        <path d="M276 425q10-30 22 0M292 360v36M284 380l22 30" />
      </g>
      <g fontFamily="'Liberation Sans', sans-serif">
        <text x="384" y="322" fontSize="54" fontWeight="bold" fill="#5a5f6b" transform="rotate(-14 384 322)">
          LEFT
        </text>
        <text x="450" y="104" fontSize="84" fontWeight="bold" fill="#2420b8">
          Z
        </text>
        <text x="240" y="518" fontSize="84" fontWeight="bold" fill="#22c832">
          Y
        </text>
        <text x="526" y="588" fontSize="90" fontWeight="bold" fill="#b42030">
          X
        </text>
      </g>
    </svg>
  );
}

// ---------- navigation toolbar ----------

function Nav({ label, caret, className, children }: { label: string; caret?: string; className?: string; children: ReactNode }) {
  return (
    <IconButton label={label} className={className}>
      <Svg box="0 0 32 32" className="size-8">{children}</Svg>
      {caret && <Caret className={caret} />}
    </IconButton>
  );
}

function Lens() {
  return (
    <>
      <path d="M20 20l10 10" stroke="#333" strokeWidth="5" />
      <circle cx="12" cy="12" r="11" fill="#f7f7f7" stroke="#444" strokeWidth="2" />
    </>
  );
}

function NavToolbar() {
  return (
    <div className="absolute bottom-3 left-1/2 flex h-12 -translate-x-1/2 items-center border border-[#d8d8d8] bg-[#f0f0f0] px-1.5 text-[#333]">
      <Nav label="Orbit" caret="ml-2.5 size-3">
        <ellipse cx="15" cy="16" rx="14" ry="6" stroke="#666" strokeWidth="2" />
        <ellipse cx="15" cy="16" rx="6" ry="15" stroke="#666" strokeWidth="2" />
        <path d="M12 16h7M15 13v6" stroke="#666" strokeWidth="2" />
        <path d="M19 6h4v4zM24 11h4v4z" fill="#333" />
      </Nav>
      <Nav label="Look At" className="ml-3">
        <path d="M5 10L18 2l6 1-6 6z" fill="#999aa8" stroke="#444" strokeWidth="2" />
        <rect x="3" y="11" width="26" height="20" fill="#fff" stroke="#444" strokeWidth="2" />
        <rect x="7" y="16" width="18" height="10" fill="#a9a9bc" stroke="#444" strokeWidth="2" />
      </Nav>
      <Nav label="Pan" className="ml-[19px]">
        <path
          d="M11 31Q5 26 1 17q1-3 4-1l5 5L7 5q2-3 4 0l3 11V2q2-3 4 0v14l3-13q3-2 4 1l-2 14 4-8q3-1 4 1l-4 13q-2 5-5 7z"
          fill="#fff"
          stroke="#555"
          strokeWidth="2"
        />
      </Nav>
      <Nav label="Zoom" className="ml-[19px]">
        <Lens />
        <path d="M24 4h7M28 0v8M24 11h7" stroke="#444" strokeWidth="2" />
      </Nav>
      <Nav label="Zoom Window" caret="ml-2 size-3" className="ml-[22px]">
        <path d="M1 1h30v30H1z" stroke="#888" strokeDasharray="4 3" />
        <Lens />
      </Nav>
      <Nav label="Display Settings" caret="ml-1 size-3" className="ml-3">
        <rect x="1" y="1" width="30" height="24" fill="#fff" stroke="#444" strokeWidth="2" />
        <rect x="4" y="4" width="24" height="18" fill="#93bcdc" stroke="#4a6b85" />
        <path d="M13 26h6v3h6v2H7v-2h6z" fill="#888" />
      </Nav>
      <Nav label="Grid and Snaps" caret="ml-1 size-3" className="ml-3.5">
        <rect x="1" y="1" width="30" height="30" fill="#fff" stroke="#444" strokeWidth="2" />
        <rect x="1" y="13" width="30" height="18" fill="#9a9aaa" fillOpacity="0.5" />
        <path
          d="M5 1v30M9 1v30M13 1v30M17 1v30M21 1v30M25 1v30M1 5h30M1 9h30M1 13h30M1 17h30M1 21h30M1 25h30"
          stroke="#777"
        />
      </Nav>
      <Nav label="Viewports" caret="ml-1 size-3" className="ml-3.5">
        <rect x="1" y="4" width="30" height="25" fill="#94b4e0" stroke="#2f5597" strokeWidth="2" />
        <path d="M16 4v25M1 16h30" stroke="#2f5597" strokeWidth="2" />
      </Nav>
    </div>
  );
}

function Viewport() {
  return (
    <main className="relative flex flex-1 flex-col justify-between overflow-hidden px-2 pt-[7px] pb-2">
      <Scene />
      <div className="relative">
        <BrowserPanel />
      </div>
      <div className="relative flex h-[50px] w-[600px] items-center justify-between border-b-2 border-[#cfcdd8] bg-[#f0f0f0] pl-[50px] pr-[23px] text-[22px] text-[#555]">
        <h2>COMMENTS</h2>
        <IconButton label="Open comments" className="w-[18px]">
          <Svg box="0 0 18 18" className="size-[18px]">
            <circle cx="9" cy="9" r="9" fill="#2b2b2b" />
            <path d="M4 9h10M9 4v10" stroke="#fff" strokeWidth="2" />
          </Svg>
        </IconButton>
      </div>
      <ViewCube />
      <NavToolbar />
      <button
        type="button"
        aria-label="Assistant"
        className="absolute bottom-2.5 right-6 flex size-[34px] items-center justify-center rounded-full rounded-br-none border border-[#8f9aa3] bg-black"
      >
        <Svg box="0 0 20 14" className="w-5 h-3.5">
          <path d="M0 8L11 1M2 12L17 2M12 12l7-4M18 1v4" stroke="#fff" strokeWidth="2" />
        </Svg>
      </button>
    </main>
  );
}

// ---------- timeline ----------

// s = sketch, e = extrude, f = fillet
const FEATURES = "sesesseeeeseeeseseefe";

function FeatureIcon({ kind }: { kind: string }) {
  if (kind === "s") {
    return (
      <Svg box="0 0 32 32" className="size-8">
        <path d="M3 3h24v26H3z" fill="#eef5fb" stroke="#7c9ab0" strokeWidth="2" />
        <path d="M10 10h11M10 10v12" stroke="#7c9ab0" strokeWidth="2" />
        <path d="M20 11q-1 9-9 11" stroke="#a47ab0" strokeWidth="2" />
        <path d="M1 1h4v4H1zM25 1h4v4h-4zM1 27h4v4H1zM9 9h3v3H9zM19 9h3v3h-3z" fill="#456a84" />
        <path d="M16 31l2-7 9-9 5 5-9 9z" fill="#f2a93b" />
        <path d="M25 17l3-3q3 0 4 4l-2 3z" fill="#c63a4a" />
        <path d="M16 31l1-4 3 3z" fill="#5a3a1a" />
      </Svg>
    );
  }
  if (kind === "f") {
    return (
      <Svg box="0 0 32 32" className="size-8">
        <path d="M1 8l7-7h9q14 3 14 18v6l-6 6H1z" fill="#dcdcdc" stroke="#666" strokeWidth="2" />
        <path d="M12 7l5-6q13 3 14 16l-6 5q0-14-13-15z" fill="#4f9ad8" stroke="#fff" />
      </Svg>
    );
  }
  return (
    <Svg box="0 0 32 32" className="size-8">
      <path d="M3 28h16l6-6v4l-6 6H3z" fill="#a5a5a5" />
      <path d="M3 6l6-6h16v20l-6 7H3z" fill="#5aaeea" />
      <path d="M3 6l6-6h16l-6 6z" fill="#8fcbf6" />
      <path d="M19 6l6-6v20l-6 7z" fill="#3a86c4" />
      <path d="M29 28V5" stroke="#222" strokeWidth="2" />
      <path d="M26 6l3-6 3 6z" fill="#222" />
    </Svg>
  );
}

const PLAYBACK: [string, string][] = [
  ["Go to start", "M1 2h3v24H1zM22 2v24L6 14z"],
  ["Step back", "M18 2v24L0 14zM20 10h4v12h-4z"],
  ["Play", "M2 0v28l22-14z"],
  ["Step forward", "M8 2v24l18-12zM2 10h4v12H2z"],
  ["Go to end", "M4 2v24l16-12zM21 2h3v24h-3z"],
];

function Timeline() {
  return (
    <footer className="flex h-[100px] items-start border-t-4 border-[#c6cad0] bg-[#f0f0f0]">
      <div className="mt-9 flex gap-[25px] pl-[22px]">
        {PLAYBACK.map(([label, d]) => (
          <IconButton key={label} label={label} className="w-6">
            <Svg box="0 0 24 28" className="w-6 h-7 overflow-visible">
              <path d={d} fill="#555" />
            </Svg>
          </IconButton>
        ))}
      </div>
      <ol className="ml-[45px] mt-[31px] flex">
        {FEATURES.split("").map((kind, i) => (
          <li key={i} className="w-12">
            <button type="button" aria-label={`Feature ${i + 1}`} className="block pl-1">
              <FeatureIcon kind={kind} />
            </button>
            <div
              className={clsx(
                "ml-5 mt-2 h-3.5 border-l-4 border-[#c6c6c6]",
                i === FEATURES.length - 1 ? "w-1" : "border-b-4"
              )}
            />
            {i > 0 && <div className="-mt-1 h-1 w-6 bg-[#c6c6c6]" />}
          </li>
        ))}
      </ol>
      <Svg box="0 0 24 64" className="-ml-4 mt-5 w-6 h-16">
        <path d="M0 0h24v7l-10 9v48h-4V16L0 7z" fill="#666" />
      </Svg>
      <IconButton label="Timeline settings" className="ml-auto mr-7 mt-[34px]">
        <Gear className="size-[30px]" />
      </IconButton>
    </footer>
  );
}

export default function App() {
  return (
    <div className="flex min-h-screen w-full flex-col bg-[#fdfdfd] px-28 pb-[148px] pt-[75px] font-['Noto_Sans','Open_Sans',sans-serif]">
      <div className="flex flex-1 flex-col overflow-hidden rounded-[20px] shadow-[0_0_3px_rgba(0,0,0,0.5),0_36px_80px_rgba(0,0,0,0.42)]">
        <TitleBar />
        <TabBar />
        <Ribbon />
        <Viewport />
        <Timeline />
      </div>
    </div>
  );
}
